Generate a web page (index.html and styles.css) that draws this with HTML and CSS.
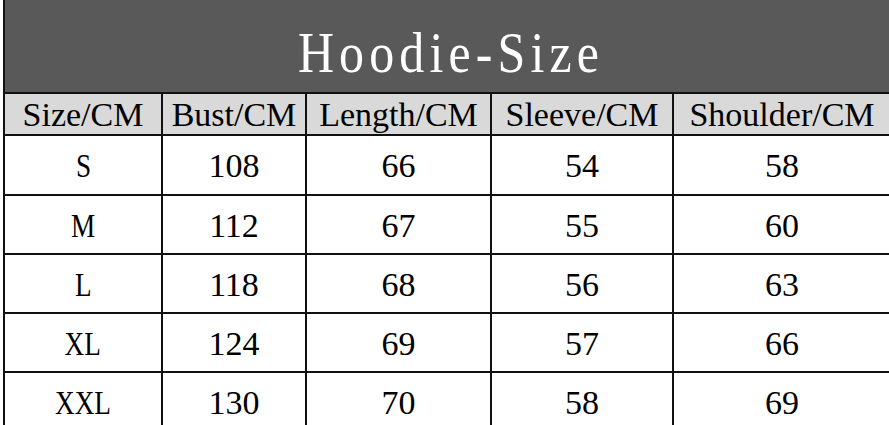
FILE: index.html
```html
<!DOCTYPE html>
<html>
<head>
<meta charset="utf-8">
<link rel="stylesheet" href="styles.css">
</head>
<body>
<div class="sheet">
  <div class="title"><span class="title-text">Hoodie-Size</span></div>
  <div class="cell head">Size/CM</div>
  <div class="cell head">Bust/CM</div>
  <div class="cell head">Length/CM</div>
  <div class="cell head">Sleeve/CM</div>
  <div class="cell head">Shoulder/CM</div>

  <div class="cell"><span class="sz">S</span></div><div class="cell">108</div><div class="cell">66</div><div class="cell">54</div><div class="cell">58</div>
  <div class="cell"><span class="sz">M</span></div><div class="cell">112</div><div class="cell">67</div><div class="cell">55</div><div class="cell">60</div>
  <div class="cell"><span class="sz">L</span></div><div class="cell">118</div><div class="cell">68</div><div class="cell">56</div><div class="cell">63</div>
  <div class="cell"><span class="sz">XL</span></div><div class="cell">124</div><div class="cell">69</div><div class="cell">57</div><div class="cell">66</div>
  <div class="cell"><span class="sz">XXL</span></div><div class="cell">130</div><div class="cell">70</div><div class="cell">58</div><div class="cell">69</div>
</div>
</body>
</html>
```
FILE: styles.css
```css
html, body {
  margin: 0;
  padding: 0;
  background: #ffffff;
  overflow: hidden;
}
body {
  width: 889px;
  height: 425px;
}
.sheet {
  margin-left: 3px;
  width: 888px;
  display: grid;
  grid-template-columns: 156px 142px 183px 180px 216px;
  grid-template-rows: 92px 40px 58px 57px 57px 57px 57px;
  gap: 2px;
  padding: 0 0 0 2px;
  background: #111111;
  font-family: "Liberation Serif", "Times New Roman", serif;
  color: #000;
}
.title {
  grid-column: 1 / -1;
  background: #595959;
  color: #ffffff;
  display: flex;
  align-items: center;
  justify-content: center;
  padding-top: 12px;
  padding-left: 6px;
}
.title-text {
  display: inline-block;
  font-size: 58px;
  letter-spacing: 6px;
  transform: scaleX(0.86);
}
.cell {
  background: #ffffff;
  display: flex;
  align-items: center;
  justify-content: center;
  font-size: 34px;
  padding-top: 2px;
}
.sz {
  display: inline-block;
  transform: scaleX(0.8);
}
.head {
  background: #d9d9d9;
  font-size: 34px;
}
```
